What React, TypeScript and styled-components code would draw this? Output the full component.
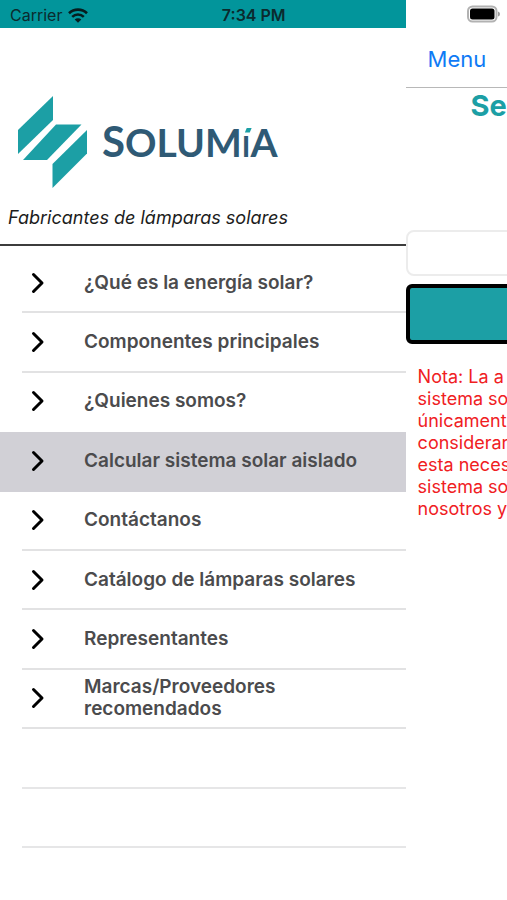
import React from "react";
import styled, { createGlobalStyle } from "styled-components";

const teal = "#1c9fa5";
const ink = "#2f5a75";

const GlobalStyle = createGlobalStyle`
  *, *::before, *::after { box-sizing: border-box; }
  body { margin: 0; background: #fff; font-family: Inter, "Noto Sans", sans-serif; }
  h1, p, ul { margin: 0; padding: 0; }
  button, input { font: inherit; }
`;

const Screen = styled.div`
  display: grid;
  grid-template-columns: minmax(0, 4fr) minmax(0, 1fr);
  min-height: 100vh;
  overflow: hidden;
`;

const Drawer = styled.aside`
  display: flex;
  flex-direction: column;
  background: #fff;
`;

const StatusBar = styled.div`
  display: flex;
  align-items: center;
  height: 28px;
  padding: 2px 10px 0;
  background: #02959b;
  color: #0b2b2e;
  font-size: 16px;
  line-height: 20px;
`;

const Carrier = styled.span`
  display: flex;
  flex: 1;
  align-items: center;
  gap: 6px;
`;

const Clock = styled.time`
  margin-right: 110px;
  font-weight: 600;
  font-size: 16px;
`;

const Brand = styled.header`
  display: flex;
  flex-direction: column;
  padding: 68px 8px 14px;
  border-bottom: 2px solid #3c3c3c;
`;

const Logo = styled.div`
  display: flex;
  align-items: center;
  gap: 14px;
  height: 92px;
  padding-left: 9px;
`;

const Wordmark = styled.div`
  padding-top: 2px;
  font-family: Lato, sans-serif;
  font-weight: 700;
  font-size: 39px;
  line-height: 40px;
  color: ${ink};
  white-space: nowrap;
`;

const Initial = styled.span`
  font-size: 42px;
`;

const AccentI = styled.span`
  position: relative;
  font-size: 29px;

  &::before {
    content: "";
    position: absolute;
    top: 0;
    left: 3px;
    width: 7px;
    height: 5px;
    background: ${teal};
    clip-path: polygon(30% 0, 100% 0, 70% 100%, 0 100%);
  }
`;

const Tagline = styled.p`
  padding-top: 17px;
  font-style: italic;
  font-size: 18px;
  line-height: 25px;
  color: #1c1c1c;
`;

const Menu = styled.ul`
  display: grid;
  grid-template-rows: repeat(10, minmax(58px, 1fr));
  flex: 1;
  margin: 8px 0 52px;
  list-style: none;
`;

const MenuRow = styled.li<{ $selected?: boolean }>`
  display: flex;
  padding-left: ${(p) => (p.$selected ? 0 : 22)}px;
  background: ${(p) => (p.$selected ? "#d1d0d6" : "transparent")};
`;

const MenuItem = styled.button<{ $selected?: boolean; $divider?: boolean }>`
  display: flex;
  flex: 1;
  align-items: center;
  gap: 38px;
  padding: 0 40px 0 ${(p) => (p.$selected ? 30 : 8)}px;
  border: 0;
  border-bottom: 2px solid ${(p) => (p.$divider ? "#e2e2e3" : "transparent")};
  background: none;
  color: #4b4b4d;
  font-weight: 600;
  font-size: 19px;
  line-height: 22px;
  text-align: left;
  cursor: pointer;

  span { flex: 1; }
`;

const EmptyRow = styled.div`
  flex: 1;
  border-bottom: 2px solid #e6e6e7;
`;

const Page = styled.main`
  display: flex;
  flex-direction: column;
  min-width: 0;
  overflow: hidden;
  white-space: nowrap;
`;

const PageStatus = styled.div`
  display: flex;
  align-items: center;
  justify-content: flex-end;
  height: 28px;
  padding-right: 7px;
`;

const NavBar = styled.nav`
  display: flex;
  align-items: center;
  height: 60px;
  padding: 2px 0 0 22px;
  border-bottom: 1px solid #b8b8b8;
`;

const MenuButton = styled.button`
  padding: 0;
  border: 0;
  background: none;
  color: #0f7af5;
  font-size: 22px;
  line-height: 28px;
  cursor: pointer;
`;

const Title = styled.h1`
  padding-left: 65px;
  color: ${teal};
  font-weight: 700;
  font-size: 29px;
  line-height: 36px;
`;

const Field = styled.input`
  flex: none;
  width: 100vw;
  height: 46px;
  margin-top: 106px;
  padding: 0 12px;
  border: 2px solid #ececec;
  border-radius: 8px;
  background: #fff;
`;

const Action = styled.button`
  flex: none;
  width: 100vw;
  height: 60px;
  margin-top: 8px;
  border: 4px solid #000;
  border-radius: 6px;
  background: ${teal};
`;

const Note = styled.p`
  padding: 22px 0 0 12px;
  color: #f0201f;
  font-size: 18px;
  line-height: 22px;
  white-space: pre;
`;

const noteLines = [
  "Nota: La a",
  "sistema so",
  "únicament",
  "considerar",
  "esta neces",
  "sistema so",
  "nosotros y",
];

const items = [
  "¿Qué es la energía solar?",
  "Componentes principales",
  "¿Quienes somos?",
  "Calcular sistema solar aislado",
  "Contáctanos",
  "Catálogo de lámparas solares",
  "Representantes",
  "Marcas/Proveedores recomendados",
];

const selected = 3;

const Chevron = () => (
  <svg width="16" height="22" viewBox="0 0 16 22" fill="none" aria-hidden="true">
    <path d="M3.500 2.500 12 11 3.500 19.500" stroke="#000" strokeWidth="3" strokeLinecap="round" strokeLinejoin="round" />
  </svg>
);

const Wifi = () => (
  <svg width="20" height="15" viewBox="0 0 20 15" fill="none" aria-hidden="true">
    <path d="M1 5.2a13 13 0 0 1 18 0" stroke="#061c1e" strokeWidth="2.6" />
    <path d="M4.2 8.8a8.4 8.4 0 0 1 11.6 0" stroke="#061c1e" strokeWidth="2.5" />
    <path d="M10 14.8 6.7 11.5a4.7 4.7 0 0 1 6.6 0Z" fill="#061c1e" />
  </svg>
);

const Battery = () => (
  <svg width="33" height="18" viewBox="0 0 33 18" role="img" aria-label="Batería">
    <rect x="1" y="1.5" width="28.5" height="15" rx="4.5" fill="#fff" stroke="#b2b2b2" strokeWidth="2" />
    <rect x="3" y="3.5" width="24.5" height="11" rx="2.5" fill="#000" />
    <path d="M31 6.5q2 .5 2 2.5t-2 2.5Z" fill="#9c9c9c" />
  </svg>
);

const Mark = () => (
  <svg width="71" height="92" viewBox="0 0 71 92" fill={teal} aria-hidden="true">
    <path d="M36 0V24L1 58V34Z" />
    <path d="M39 28.5H64.5L30 64H6Z" />
    <path d="M70 34V57.5L35.5 92V68Z" />
  </svg>
);

export default function App() {
  return (
    <>
      <GlobalStyle />
      <Screen>
        <Drawer>
          <StatusBar>
            <Carrier>
              Carrier
              <Wifi />
            </Carrier>
            <Clock>7:34 PM</Clock>
          </StatusBar>
          <Brand>
            <Logo>
              <Mark />
              <Wordmark>
                <Initial>S</Initial>OLUM<AccentI>I</AccentI>A
              </Wordmark>
            </Logo>
            <Tagline>Fabricantes de lámparas solares</Tagline>
          </Brand>
          <Menu>
            {items.map((label, i) => (
              <MenuRow key={label} $selected={i === selected}>
                <MenuItem
                  $selected={i === selected}
                  $divider={i !== selected && i !== selected - 1}
                >
                  <Chevron />
                  <span>{label}</span>
                </MenuItem>
              </MenuRow>
            ))}
            <MenuRow aria-hidden="true"><EmptyRow /></MenuRow>
            <MenuRow aria-hidden="true"><EmptyRow /></MenuRow>
          </Menu>
        </Drawer>
        <Page>
          <PageStatus><Battery /></PageStatus>
          <NavBar><MenuButton>Menu</MenuButton></NavBar>
          <Title>Se</Title>
          <Field type="text" aria-label="Valor" />
          <Action aria-label="Calcular" />
          <Note>{noteLines.join("\n")}</Note>
        </Page>
      </Screen>
    </>
  );
}
